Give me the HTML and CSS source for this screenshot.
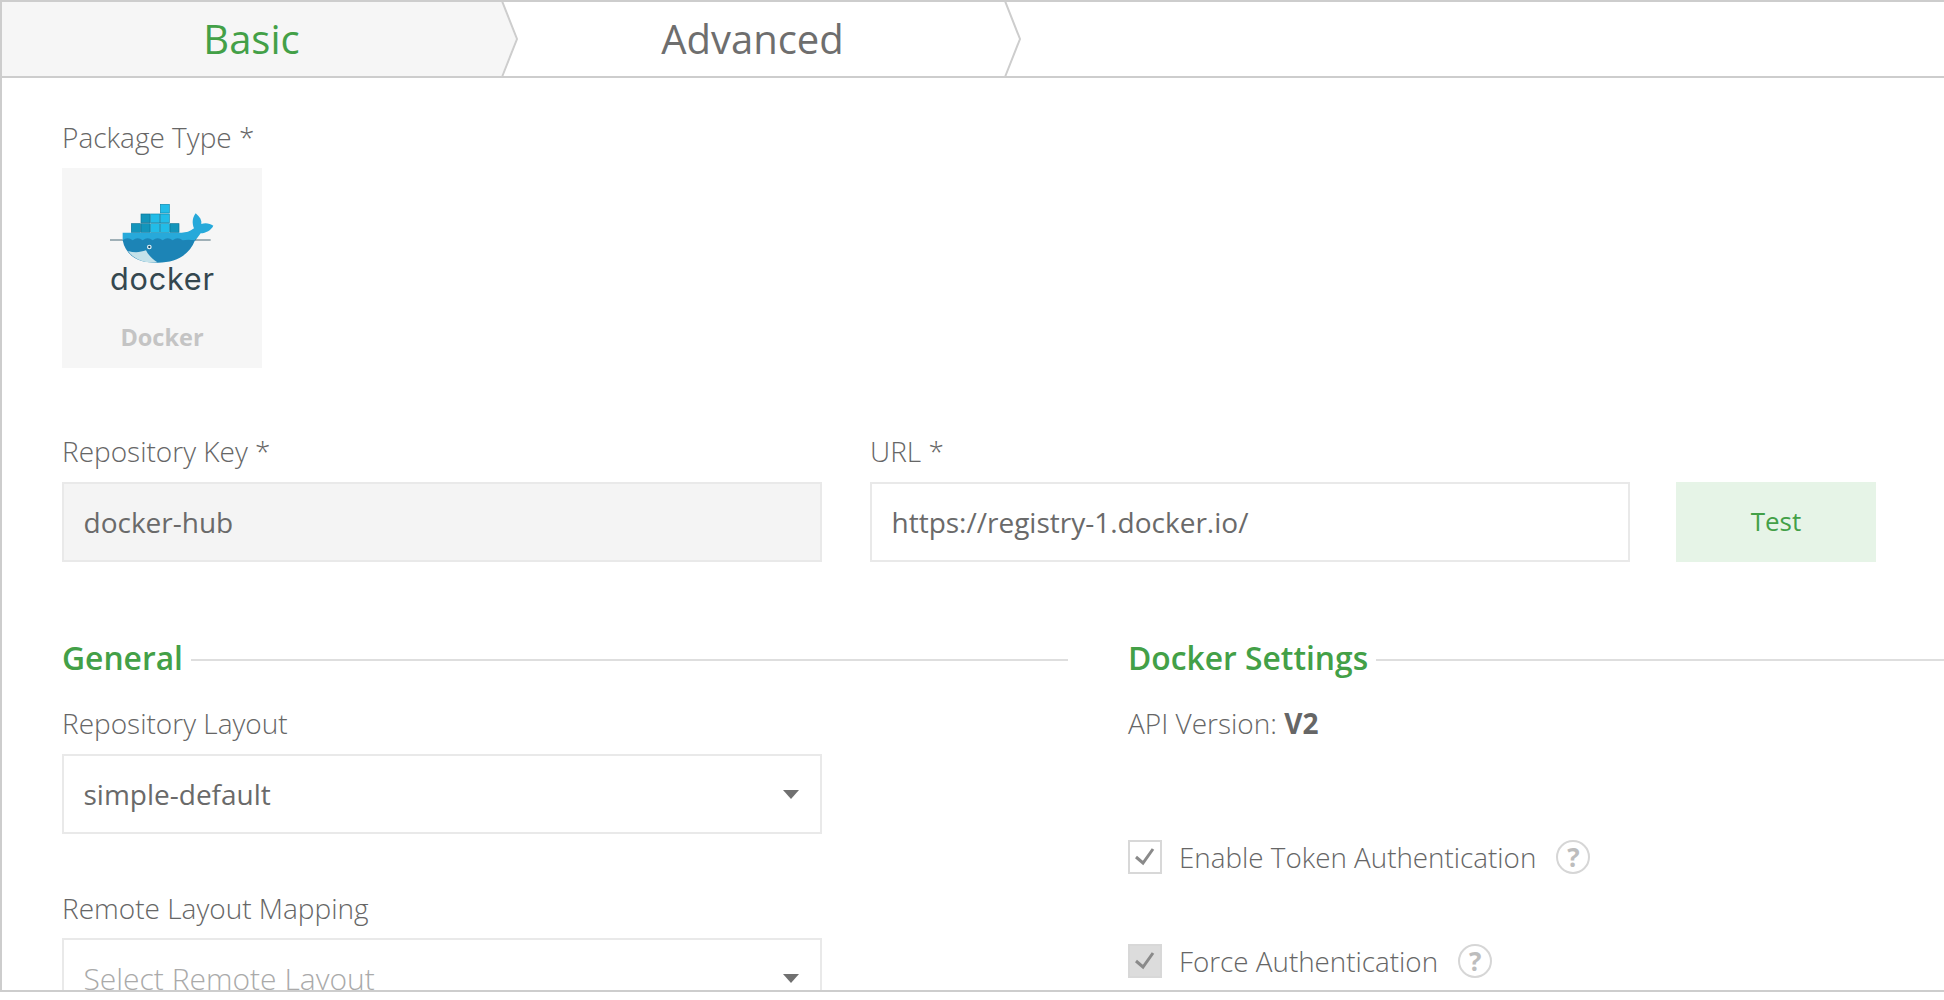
FILE: index.html
```html
<!DOCTYPE html>
<html lang="en">
<head>
<meta charset="utf-8">
<title>Docker repository</title>
<link rel="stylesheet" href="styles.css">
</head>
<body>
<div class="frame">
  <nav class="tabs">
    <div class="tab tab-active">Basic
      <svg class="chev" viewBox="0 0 18 76" width="18" height="76"><path d="M0 0V76L15 38Z" class="chev-fill"/><path d="M1 0L16 38L1 76" class="chev-line"/></svg>
    </div>
    <div class="tab">Advanced
      <svg class="chev" viewBox="0 0 18 76" width="18" height="76"><path d="M1 0L16 38L1 76" class="chev-line"/></svg>
    </div>
  </nav>
  <main class="content">
    <div class="label label-first">Package Type *</div>
    <div class="tile">
      <svg class="logo" viewBox="0 0 375 315" width="125" height="105">
        <g class="box-dark">
          <rect x="94" y="86" width="27" height="26"/><rect x="123" y="86" width="27" height="26"/><rect x="123" y="57" width="27" height="26"/><rect x="210" y="86" width="27" height="26"/>
        </g>
        <g class="box-light">
          <rect x="152" y="86" width="27" height="26"/><rect x="181" y="86" width="27" height="26"/><rect x="152" y="57" width="27" height="26"/><rect x="181" y="57" width="27" height="26"/><rect x="181" y="28" width="27" height="26"/>
        </g>
        <path class="whale-top" d="M68 113H245C258 113 270 110 282 100C277 88 275 70 287 55C300 66 306 76 304 87C316 82 330 85 340 92C333 106 318 114 302 115C295 125 290 132 285 138H68Z"/>
        <path class="whale-hull" d="M68 136C78 128 88 128 98 136C108 128 118 128 128 136C138 128 148 128 158 136C168 128 178 128 188 136C198 128 208 128 218 136C228 128 238 128 248 136C258 134 272 134 285 136C268 180 228 204 170 203C110 204 76 178 68 136Z"/>
        <path class="water" d="M30 135H68M285 135H332"/>
        <path class="belly" d="M84 168C104 174 122 172 138 166C144 180 158 192 172 202C130 206 102 192 84 168Z"/>
        <circle class="eye" cx="148" cy="156" r="7"/><circle class="pupil" cx="148" cy="156" r="3.5"/>
        <text x="30" y="285" class="wordmark" textLength="312" lengthAdjust="spacing">docker</text>
      </svg>
      <div class="tile-name">Docker</div>
    </div>

    <div class="row-fields">
      <div class="field">
        <div class="label">Repository Key *</div>
        <div class="input input-disabled">docker-hub</div>
      </div>
      <div class="field">
        <div class="label">URL *</div>
        <div class="input">https://registry-1.docker.io/</div>
      </div>
      <button class="test">Test</button>
    </div>

    <div class="columns">
      <section class="col-left">
        <h2 class="heading"><span>General</span></h2>
        <div class="label">Repository Layout</div>
        <div class="input select">simple-default<i class="caret"></i></div>
        <div class="label label-gap">Remote Layout Mapping</div>
        <div class="input select placeholder">Select Remote Layout<i class="caret"></i></div>
      </section>
      <section class="col-right">
        <h2 class="heading"><span>Docker Settings</span></h2>
        <div class="api">API Version: <b>V2</b></div>
        <div class="check check-one"><span class="box"><svg viewBox="0 0 30 30" width="30" height="30"><path d="M6 15L13 21L23 7"/></svg></span><span>Enable Token Authentication</span><span class="help">?</span></div>
        <div class="check check-two"><span class="box box-on"><svg viewBox="0 0 30 30" width="30" height="30"><path d="M6 15L13 21L23 7"/></svg></span><span>Force Authentication</span><span class="help">?</span></div>
      </section>
    </div>
  </main>
</div>
</body>
</html>
```
FILE: styles.css
```css
* { box-sizing: border-box; }
html, body { margin: 0; background: #fff; height: 1000px; overflow: hidden; }
body { font-family: "Open Sans", sans-serif; color: #6e6e6e; }
.frame { height: 992px; border-top: 2px solid #cdcdcd; border-left: 2px solid #cdcdcd; border-bottom: 2px solid #cdcdcd; overflow: hidden; }
.tabs { display: flex; height: 76px; border-bottom: 2px solid #cdcdcd; }
.tab { position: relative; width: 499px; height: 74px; display: flex; align-items: center; justify-content: center; font-size: 40px; padding-bottom: 2px; color: #6e6e6e; }
.tab-active { background: #f6f6f6; color: #43a047; }
.tab + .tab { width: 503px; }
.chev { position: absolute; left: 100%; top: -1px; overflow: visible; }
.chev-fill { fill: #f6f6f6; }
.chev-line { fill: none; stroke: #cdcdcd; stroke-width: 2; }
.content { padding: 0 0 0 60px; }
.label { font-size: 28px; font-weight: 300; line-height: 36px; color: #666; }
.label-first { margin-top: 41px; }
.tile { width: 200px; height: 200px; background: #f6f6f6; margin-top: 13px; display: flex; flex-direction: column; align-items: center; padding-top: 27px; }
.logo { display: block; flex: none; }
.box-dark rect { fill: #1395bb; stroke: #0c7396; stroke-width: 2; }
.box-light rect { fill: #22bce8; stroke: #0e88ad; stroke-width: 2; }
.whale-top { fill: #27a9da; }
.whale-hull { fill: #1c84b6; }
.water { fill: none; stroke: #4a6a78; stroke-width: 3; }
.belly { fill: #c4e2ea; }
.eye { fill: #e8f4f8; }
.pupil { fill: #174f6b; }
.wordmark { font-family: "Inter", sans-serif; font-size: 92px; fill: #34474f; }
.tile-name { font-size: 23.5px; font-weight: 700; color: #c4c4c4; margin-top: 22px; line-height: 30px; }
.row-fields { display: flex; margin-top: 65px; align-items: flex-end; }
.field { width: 760px; margin-right: 48px; }
.field + .field { margin-right: 46px; }
.input { height: 80px; border: 2px solid #e9e9e9; margin-top: 13px; padding-left: 19.5px; font-size: 28px; line-height: 76px; font-weight: 400; color: #6a6a6a; position: relative; background: #fff; }
.input-disabled { background: #f4f4f4; }
.test { width: 200px; height: 80px; background: #e6f4e7; border: 0; color: #43a047; font: 400 26px "Open Sans", sans-serif; padding: 0 0 2px; }
.columns { display: flex; margin-top: 76px; }
.col-left { width: 1006px; margin-right: 60px; }
.col-right { flex: 1; }
.heading { margin: 0; font-size: 31.8px; font-weight: 600; color: #43a047; display: flex; align-items: center; line-height: 40px; }
.heading::after { content: ""; flex: 1; height: 2px; background: #dedede; margin: 4px 0 0 8px; }
.col-left .label { margin-top: 27px; }
.col-left .label-gap { margin-top: 56px; }
.select { margin-top: 13px; width: 760px; }
.col-left .label-gap + .select { margin-top: 12px; }
.placeholder { color: #aaa; font-weight: 300; font-size: 30px; line-height: 78px; }
.caret { position: absolute; right: 21px; top: 34px; border-left: 8px solid transparent; border-right: 8px solid transparent; border-top: 9px solid #707070; }
.api { margin-top: 27px; font-size: 28px; font-weight: 300; line-height: 36px; color: #666; }
.api b { font-weight: 700; }
.check { display: flex; align-items: center; font-size: 27.8px; font-weight: 300; color: #666; height: 36px; }
.check-one { margin-top: 98px; }
.check-two { margin-top: 68px; }
.box { width: 34px; height: 34px; border: 2px solid #d8d8d8; margin-right: 17px; display: block; flex: none; }
.box svg { display: block; }
.box path { fill: none; stroke: #8a8a8a; stroke-width: 3; }
.box-on { background: #dcdcdc; }
.help { width: 34px; height: 34px; border: 2.5px solid #d6d6d6; border-radius: 50%; margin-left: 20px; font-size: 26px; font-weight: 700; color: #bdbdbd; display: flex; align-items: center; justify-content: center; }
```
